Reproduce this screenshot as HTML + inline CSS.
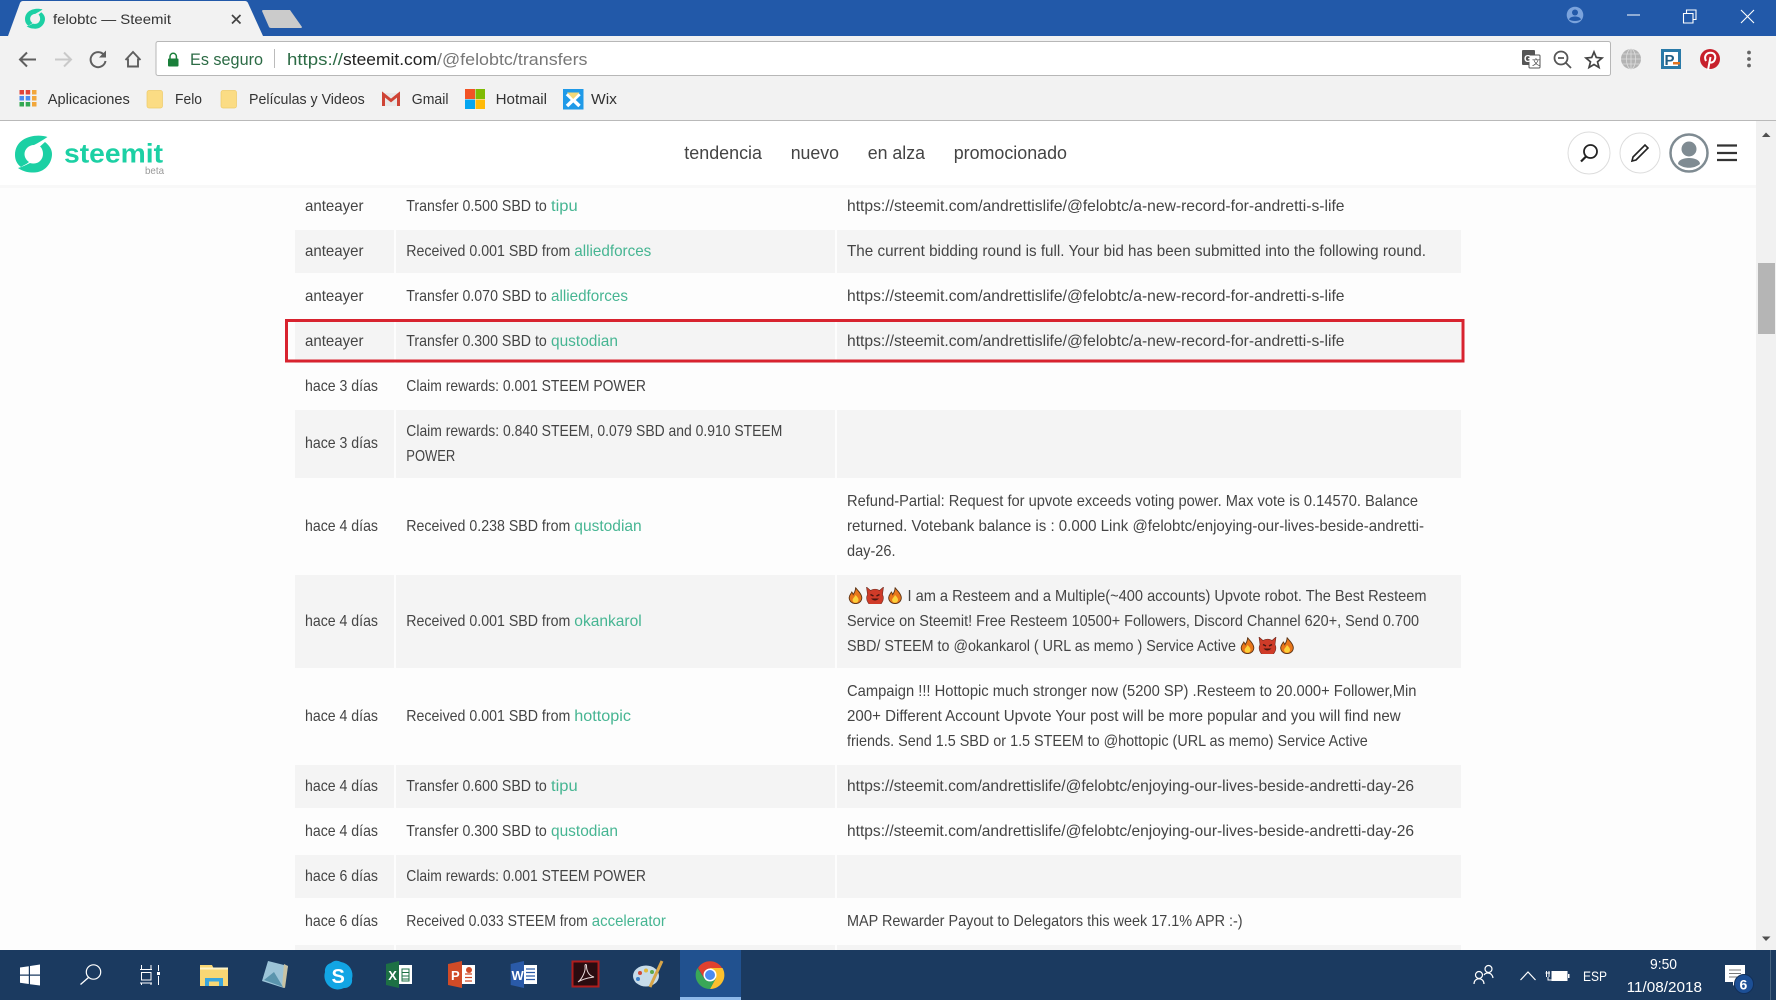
<!DOCTYPE html>
<html lang="es"><head><meta charset="utf-8"><title>felobtc — Steemit</title>
<style>
html,body{margin:0;padding:0;width:1776px;height:1000px;overflow:hidden;background:#fdfdfd}
svg{display:block;font-family:"Liberation Sans",sans-serif}
.t{font-size:15.6px;fill:#444}
.l{font-size:15.6px;fill:#46b592}
.b{font-size:14.5px;fill:#333}
.n{font-size:18px;fill:#444}
.w{fill:#fff}
</style></head><body>
<svg width="1776" height="1000" viewBox="0 0 1776 1000" xmlns="http://www.w3.org/2000/svg">
<defs>
<symbol id="fire" viewBox="0 0 15 17"><path d="M7.5 .5C9 3 13.5 6 13.8 10.500C14 14 11 16.600 7.500 16.600C4 16.600 1 14 1.200 10.500C1.300 8 3 6.800 3.800 5C4.600 6 5 6.800 5.200 7.500C6.500 5.500 7.800 3 7.500 .5Z" fill="#e8761a" stroke="#5a3315" stroke-width=".9"/><path d="M7.500 8C9.500 10 10.800 11.500 10.500 13.300C10.200 15 9 15.800 7.500 15.800C6 15.800 4.800 15 4.600 13.300C4.400 11.500 6.500 10.500 7.500 8Z" fill="#fbd03a"/></symbol>
<symbol id="devil" viewBox="0 0 19 17"><path d="M1 0L5 3.500A8.300 8.300 0 0 1 14 3.500L18 0L17 7.500A8.300 8.300 0 1 1 2 7.500Z" fill="#cf3b28" stroke="#6b2a1e" stroke-width=".6"/><path d="M5 7.500L8 9M14 7.500L11 9" stroke="#4a1610" stroke-width="1.500"/><path d="M5.500 11.500Q9.500 15.500 13.500 11.500Z" fill="#4a1610"/></symbol>
<g id="swirl" fill="#1cd0a4">
<path d="M47.500 137C36 133 15 137 15 155C15 160 17 164 21 167C24 165 27 164 29 162C26 160 24.500 157 24.500 154C24.500 149 29 145 34 145C38 143 43 140 47.500 137Z"/>
<path d="M18 168C24 172 28 172.500 34 172.500C44 172.500 52 164 52 154C52 150 50 146 45 142L40 146.500C42 148 43 151 43 154C43 159 39 163.500 34 163.500C32 163.500 31 163.300 30 163C26 165 22 167 18 168Z"/>
</g>
</defs>

<!-- page bg -->
<rect width="1776" height="1000" fill="#fdfdfd"/>

<!-- table stripes -->
<g fill="#f4f4f4">
<rect x="295" y="230" width="99" height="43"/><rect x="396" y="230" width="439" height="43"/><rect x="837" y="230" width="624" height="43"/>
<rect x="295" y="320" width="99" height="43"/><rect x="396" y="320" width="439" height="43"/><rect x="837" y="320" width="624" height="43"/>
<rect x="295" y="410" width="99" height="68"/><rect x="396" y="410" width="439" height="68"/><rect x="837" y="410" width="624" height="68"/>
<rect x="295" y="575" width="99" height="93"/><rect x="396" y="575" width="439" height="93"/><rect x="837" y="575" width="624" height="93"/>
<rect x="295" y="765" width="99" height="43"/><rect x="396" y="765" width="439" height="43"/><rect x="837" y="765" width="624" height="43"/>
<rect x="295" y="855" width="99" height="43"/><rect x="396" y="855" width="439" height="43"/><rect x="837" y="855" width="624" height="43"/>
<rect x="295" y="945" width="99" height="5"/><rect x="396" y="945" width="439" height="5"/><rect x="837" y="945" width="624" height="5"/>
</g>

<!-- col 1 -->
<g class="t">
<text class="t" x="305" y="211" textLength="58.500" lengthAdjust="spacingAndGlyphs">anteayer</text>
<text class="t" x="305" y="256" textLength="58.500" lengthAdjust="spacingAndGlyphs">anteayer</text>
<text class="t" x="305" y="301" textLength="58.500" lengthAdjust="spacingAndGlyphs">anteayer</text>
<text class="t" x="305" y="346" textLength="58.500" lengthAdjust="spacingAndGlyphs">anteayer</text>
<text class="t" x="305" y="391" textLength="73" lengthAdjust="spacingAndGlyphs">hace 3 días</text>
<text class="t" x="305" y="448" textLength="73" lengthAdjust="spacingAndGlyphs">hace 3 días</text>
<text class="t" x="305" y="531" textLength="73" lengthAdjust="spacingAndGlyphs">hace 4 días</text>
<text class="t" x="305" y="626" textLength="73" lengthAdjust="spacingAndGlyphs">hace 4 días</text>
<text class="t" x="305" y="721" textLength="73" lengthAdjust="spacingAndGlyphs">hace 4 días</text>
<text class="t" x="305" y="791" textLength="73" lengthAdjust="spacingAndGlyphs">hace 4 días</text>
<text class="t" x="305" y="836" textLength="73" lengthAdjust="spacingAndGlyphs">hace 4 días</text>
<text class="t" x="305" y="881" textLength="73" lengthAdjust="spacingAndGlyphs">hace 6 días</text>
<text class="t" x="305" y="926" textLength="73" lengthAdjust="spacingAndGlyphs">hace 6 días</text>
</g>

<!-- col 2 -->
<text class="t" x="406.300" y="211" textLength="140.500" lengthAdjust="spacingAndGlyphs">Transfer 0.500 SBD to</text><text class="l" x="551" y="211" textLength="26.700" lengthAdjust="spacingAndGlyphs">tipu</text>
<text class="t" x="406.300" y="256" textLength="164" lengthAdjust="spacingAndGlyphs">Received 0.001 SBD from</text><text class="l" x="574.300" y="256" textLength="77" lengthAdjust="spacingAndGlyphs">alliedforces</text>
<text class="t" x="406.300" y="301" textLength="140.500" lengthAdjust="spacingAndGlyphs">Transfer 0.070 SBD to</text><text class="l" x="551" y="301" textLength="77" lengthAdjust="spacingAndGlyphs">alliedforces</text>
<text class="t" x="406.300" y="346" textLength="140.500" lengthAdjust="spacingAndGlyphs">Transfer 0.300 SBD to</text><text class="l" x="551" y="346" textLength="67" lengthAdjust="spacingAndGlyphs">qustodian</text>
<text class="t" x="406.300" y="391" textLength="239.600" lengthAdjust="spacingAndGlyphs">Claim rewards: 0.001 STEEM POWER</text>
<text class="t" x="406.300" y="436" textLength="376" lengthAdjust="spacingAndGlyphs">Claim rewards: 0.840 STEEM, 0.079 SBD and 0.910 STEEM</text>
<text class="t" x="406.300" y="461" textLength="49" lengthAdjust="spacingAndGlyphs">POWER</text>
<text class="t" x="406.300" y="531" textLength="164" lengthAdjust="spacingAndGlyphs">Received 0.238 SBD from</text><text class="l" x="574.300" y="531" textLength="67.400" lengthAdjust="spacingAndGlyphs">qustodian</text>
<text class="t" x="406.300" y="626" textLength="164" lengthAdjust="spacingAndGlyphs">Received 0.001 SBD from</text><text class="l" x="574.300" y="626" textLength="67.400" lengthAdjust="spacingAndGlyphs">okankarol</text>
<text class="t" x="406.300" y="721" textLength="164" lengthAdjust="spacingAndGlyphs">Received 0.001 SBD from</text><text class="l" x="574.300" y="721" textLength="56.700" lengthAdjust="spacingAndGlyphs">hottopic</text>
<text class="t" x="406.300" y="791" textLength="140.500" lengthAdjust="spacingAndGlyphs">Transfer 0.600 SBD to</text><text class="l" x="551" y="791" textLength="26.700" lengthAdjust="spacingAndGlyphs">tipu</text>
<text class="t" x="406.300" y="836" textLength="140.500" lengthAdjust="spacingAndGlyphs">Transfer 0.300 SBD to</text><text class="l" x="551" y="836" textLength="67" lengthAdjust="spacingAndGlyphs">qustodian</text>
<text class="t" x="406.300" y="881" textLength="239.600" lengthAdjust="spacingAndGlyphs">Claim rewards: 0.001 STEEM POWER</text>
<text class="t" x="406.300" y="926" textLength="181.500" lengthAdjust="spacingAndGlyphs">Received 0.033 STEEM from</text><text class="l" x="591.800" y="926" textLength="74" lengthAdjust="spacingAndGlyphs">accelerator</text>

<!-- col 3 -->
<text class="t" x="847" y="211" textLength="497.500" lengthAdjust="spacingAndGlyphs">https://steemit.com/andrettislife/@felobtc/a-new-record-for-andretti-s-life</text>
<text class="t" x="847" y="256" textLength="579" lengthAdjust="spacingAndGlyphs">The current bidding round is full. Your bid has been submitted into the following round.</text>
<text class="t" x="847" y="301" textLength="497.500" lengthAdjust="spacingAndGlyphs">https://steemit.com/andrettislife/@felobtc/a-new-record-for-andretti-s-life</text>
<text class="t" x="847" y="346" textLength="497.500" lengthAdjust="spacingAndGlyphs">https://steemit.com/andrettislife/@felobtc/a-new-record-for-andretti-s-life</text>
<text class="t" x="847" y="506" textLength="571" lengthAdjust="spacingAndGlyphs">Refund-Partial: Request for upvote exceeds voting power. Max vote is 0.14570. Balance</text>
<text class="t" x="847" y="531" textLength="577" lengthAdjust="spacingAndGlyphs">returned. Votebank balance is : 0.000 Link @felobtc/enjoying-our-lives-beside-andretti-</text>
<text class="t" x="847" y="556" textLength="48.500" lengthAdjust="spacingAndGlyphs">day-26.</text>
<use href="#fire" x="848" y="587" width="15" height="17"/><use href="#devil" x="865.500" y="587" width="19" height="17"/><use href="#fire" x="887.500" y="587" width="15" height="17"/>
<text class="t" x="907.500" y="601" textLength="519" lengthAdjust="spacingAndGlyphs">I am a Resteem and a Multiple(~400 accounts) Upvote robot. The Best Resteem</text>
<text class="t" x="847" y="626" textLength="572" lengthAdjust="spacingAndGlyphs">Service on Steemit! Free Resteem 10500+ Followers, Discord Channel 620+, Send 0.700</text>
<text class="t" x="847" y="651" textLength="389" lengthAdjust="spacingAndGlyphs">SBD/ STEEM to @okankarol ( URL as memo ) Service Active</text>
<use href="#fire" x="1240" y="637" width="15" height="17"/><use href="#devil" x="1258" y="637" width="19" height="17"/><use href="#fire" x="1279.500" y="637" width="15" height="17"/>
<text class="t" x="847" y="696" textLength="569.500" lengthAdjust="spacingAndGlyphs">Campaign !!! Hottopic much stronger now (5200 SP) .Resteem to 20.000+ Follower,Min</text>
<text class="t" x="847" y="721" textLength="553.600" lengthAdjust="spacingAndGlyphs">200+ Different Account Upvote Your post will be more popular and you will find new</text>
<text class="t" x="847" y="746" textLength="520.800" lengthAdjust="spacingAndGlyphs">friends. Send 1.5 SBD or 1.5 STEEM to @hottopic (URL as memo) Service Active</text>
<text class="t" x="847" y="791" textLength="567" lengthAdjust="spacingAndGlyphs">https://steemit.com/andrettislife/@felobtc/enjoying-our-lives-beside-andretti-day-26</text>
<text class="t" x="847" y="836" textLength="567" lengthAdjust="spacingAndGlyphs">https://steemit.com/andrettislife/@felobtc/enjoying-our-lives-beside-andretti-day-26</text>
<text class="t" x="847" y="926" textLength="395.600" lengthAdjust="spacingAndGlyphs">MAP Rewarder Payout to Delegators this week 17.1% APR :-)</text>

<!-- red box -->
<rect x="286.500" y="320.500" width="1176.500" height="40.500" fill="none" stroke="#d8232f" stroke-width="3"/>

<!-- site header -->
<rect x="0" y="185" width="1756" height="3" fill="#f8f8f8"/>
<rect x="0" y="121" width="1756" height="64" fill="#fff"/>
<use href="#swirl"/>
<text x="64" y="162.500" font-size="27" font-weight="700" fill="#1cd0a4" textLength="99" lengthAdjust="spacingAndGlyphs">steemit</text>
<text x="145" y="174" font-size="10.500" fill="#999" textLength="19" lengthAdjust="spacingAndGlyphs">beta</text>
<text class="n" x="684.300" y="159" textLength="77.700" lengthAdjust="spacingAndGlyphs">tendencia</text>
<text class="n" x="790.700" y="159" textLength="48.300" lengthAdjust="spacingAndGlyphs">nuevo</text>
<text class="n" x="867.700" y="159" textLength="57.300" lengthAdjust="spacingAndGlyphs">en alza</text>
<text class="n" x="953.700" y="159" textLength="113.300" lengthAdjust="spacingAndGlyphs">promocionado</text>
<circle cx="1589" cy="153" r="21" fill="#fff" stroke="#ddd" stroke-width="1"/>
<circle cx="1590.500" cy="151.500" r="6.500" fill="none" stroke="#222" stroke-width="1.800"/>
<path d="M1586 156.500L1581 161.500" stroke="#222" stroke-width="2.200"/>
<circle cx="1640" cy="153" r="20" fill="#fff" stroke="#ddd" stroke-width="1"/>
<path d="M1633 157L1645 145L1648 148L1636 160L1632 161Z" fill="none" stroke="#222" stroke-width="1.600"/>
<circle cx="1689" cy="153" r="18.500" fill="#fff" stroke="#7f8b92" stroke-width="2.500"/>
<circle cx="1689" cy="149" r="7.500" fill="#7f8b92"/>
<path d="M1678 164C1678 156 1700 156 1700 164C1694 169 1684 169 1678 164Z" fill="#7f8b92"/>
<path d="M1717 145.500H1737M1717 153H1737M1717 160H1737" stroke="#333" stroke-width="2.300"/>

<!-- scrollbar -->
<rect x="1756" y="121" width="20" height="829" fill="#f1f1f1"/>
<rect x="1758" y="263" width="17" height="71" fill="#b5b5b5"/>
<path d="M1762 137L1766 132.500L1770.500 137Z" fill="#505050"/>
<path d="M1762 936.500L1766 941L1770.500 936.500Z" fill="#505050"/>

<!-- title bar -->
<rect width="1776" height="36" fill="#2259a9"/>
<rect y="36" width="1776" height="84" fill="#f2f2f2"/>
<rect y="120" width="1776" height="1" fill="#b9b9b9"/>
<path d="M8 36L20 3Q21 1 23 1H245Q247 1 248 3L263 36Z" fill="#f2f2f2"/>
<use href="#swirl" transform="translate(35 19) scale(.54) translate(-33.500 -154.500)"/>
<text x="53" y="24" font-size="14" fill="#333" textLength="118" lengthAdjust="spacingAndGlyphs">felobtc — Steemit</text>
<path d="M232 15L240.500 23.500M240.500 15L232 23.500" stroke="#444" stroke-width="1.700"/>
<path d="M262 11Q262 10 263.500 10H290L302 27Q302 28 300 28H271Q269.500 28 269 27Z" fill="#cbcbcb"/>
<circle cx="1575" cy="15" r="8.300" fill="#7ba3dc"/><circle cx="1575" cy="12.500" r="3" fill="#2259a9"/><path d="M1569 19.500C1570 15.500 1580 15.500 1581 19.500C1578 21.500 1572 21.500 1569 19.500Z" fill="#2259a9"/>
<path d="M1627 15H1640" stroke="#fff" stroke-width="1"/>
<path d="M1683.500 13.500h9.500v9.500h-9.500zM1686.500 13.500v-3.500h9.500v9.500h-3" fill="none" stroke="#fff" stroke-width="1.100"/>
<path d="M1741 10L1754 23M1754 10L1741 23" stroke="#fff" stroke-width="1.100"/>

<!-- toolbar -->
<path d="M36 59.500H20M27 52.500L20 59.500L27 66.500" fill="none" stroke="#5f5f5f" stroke-width="2"/>
<path d="M71 59.500H55M64 52.500L71 59.500L64 66.500" fill="none" stroke="#c9c9c9" stroke-width="2"/>
<path d="M104 55A7.500 7.500 0 1 0 105.500 61" fill="none" stroke="#5f5f5f" stroke-width="2"/>
<path d="M106 50.500V57.500H99Z" fill="#5f5f5f"/>
<path d="M125.500 60L133 52L140.500 60M128 58.500V66.500H138V58.500" fill="none" stroke="#5f5f5f" stroke-width="1.900"/>
<rect x="156" y="41.500" width="1454.500" height="34" rx="2" fill="#fff" stroke="#b7b7b7"/>
<rect x="168" y="58.500" width="10.500" height="8" rx="1" fill="#1a7f3a"/>
<path d="M170 59V56.500a3.200 3.200 0 0 1 6.400 0V59" fill="none" stroke="#1a7f3a" stroke-width="1.500"/>
<text x="190" y="65" font-size="17" fill="#2c6b45" textLength="73" lengthAdjust="spacingAndGlyphs">Es seguro</text>
<rect x="274" y="49" width="1" height="19" fill="#bbb"/>
<text x="287" y="65" font-size="17" fill="#2c6b45" textLength="56" lengthAdjust="spacingAndGlyphs">https://</text>
<text x="343" y="65" font-size="17" fill="#222" textLength="94" lengthAdjust="spacingAndGlyphs">steemit.com</text>
<text x="437" y="65" font-size="17" fill="#777" textLength="150.500" lengthAdjust="spacingAndGlyphs">/@felobtc/transfers</text>

<!-- omnibox right icons -->
<rect x="1522" y="50" width="13" height="15" rx="1" fill="#555"/>
<rect x="1529" y="55" width="11" height="13" rx="1" fill="#fff" stroke="#555"/>
<text x="1524" y="62" font-size="10" font-weight="700" fill="#fff">G</text>
<text x="1532" y="65" font-size="8" fill="#444">文</text>
<circle cx="1561" cy="58" r="6.500" fill="none" stroke="#555" stroke-width="1.800"/>
<path d="M1558 58H1564M1566 63L1571 68" stroke="#555" stroke-width="1.800"/>
<path d="M1594 52L1596.300 57.500L1602 58L1597.500 61.800L1599 67.500L1594 64.500L1589 67.500L1590.500 61.800L1586 58L1591.700 57.500Z" fill="none" stroke="#444" stroke-width="1.700"/>
<circle cx="1631" cy="59" r="10" fill="#b3b3b3"/>
<path d="M1621 59H1641M1622.500 54H1639.500M1622.500 64H1639.500M1631 49V69" stroke="#ddd" stroke-width=".8"/>
<ellipse cx="1631" cy="59" rx="4.500" ry="10" fill="none" stroke="#ddd" stroke-width=".8"/>
<rect x="1661" y="49" width="20" height="20" fill="#2a7aa8"/>
<rect x="1664" y="52" width="14" height="14" fill="#fff"/>
<text x="1664.500" y="65" font-size="15" font-weight="700" fill="#1f5f86">P</text>
<rect x="1673" y="62" width="7" height="2.500" fill="#e2731e"/>
<circle cx="1710" cy="59" r="10" fill="#c8202c"/>
<path d="M1708 70L1710.500 57M1706 61C1703.500 56 1706.500 52.800 1710.500 52.800C1714.500 52.800 1716 56 1715 59C1714 62.500 1710.500 63.500 1709 61.500" fill="none" stroke="#fff" stroke-width="2"/>
<circle cx="1749" cy="52.500" r="1.900" fill="#666"/><circle cx="1749" cy="59" r="1.900" fill="#666"/><circle cx="1749" cy="65.500" r="1.900" fill="#666"/>

<!-- bookmarks -->
<g>
<rect x="19.500" y="90" width="4.500" height="4.500" fill="#e0453a"/><rect x="25.700" y="90" width="4.500" height="4.500" fill="#e0453a"/><rect x="32" y="90" width="4.500" height="4.500" fill="#f2a73b"/>
<rect x="19.500" y="96" width="4.500" height="4.500" fill="#4a8bf0"/><rect x="25.700" y="96" width="4.500" height="4.500" fill="#4a8bf0"/><rect x="32" y="96" width="4.500" height="4.500" fill="#f2a73b"/>
<rect x="19.500" y="102" width="4.500" height="4.500" fill="#34a853"/><rect x="25.700" y="102" width="4.500" height="4.500" fill="#34a853"/><rect x="32" y="102" width="4.500" height="4.500" fill="#f2a73b"/>
</g>
<text class="b" x="47.800" y="104" textLength="82" lengthAdjust="spacingAndGlyphs">Aplicaciones</text>
<rect x="147" y="90.500" width="15.500" height="17.500" rx="2" fill="#fbdc84" stroke="#eecb6a" stroke-width=".7"/>
<text class="b" x="175" y="104" textLength="27" lengthAdjust="spacingAndGlyphs">Felo</text>
<rect x="221" y="90.500" width="15.500" height="17.500" rx="2" fill="#fbdc84" stroke="#eecb6a" stroke-width=".7"/>
<text class="b" x="249" y="104" textLength="115.700" lengthAdjust="spacingAndGlyphs">Películas y Videos</text>
<rect x="382" y="93" width="18" height="13" fill="#e8e8e8"/>
<path d="M383.500 106V94.500L391 100.500L398.500 94.500V106" fill="none" stroke="#cf4436" stroke-width="3"/>
<text class="b" x="411.800" y="104" textLength="36.700" lengthAdjust="spacingAndGlyphs">Gmail</text>
<rect x="465" y="89" width="10" height="10" fill="#f25325"/><rect x="475.500" y="89" width="9.500" height="10" fill="#80bb03"/>
<rect x="465" y="99.500" width="10" height="9.500" fill="#05a6f0"/><rect x="475.500" y="99.500" width="9.500" height="9.500" fill="#ffba08"/>
<text class="b" x="495.600" y="104" textLength="51.400" lengthAdjust="spacingAndGlyphs">Hotmail</text>
<rect x="563" y="89" width="20.500" height="20.500" fill="#1f9ae8"/>
<path d="M567 94L579.500 106M579.500 94L567 106" stroke="#fff" stroke-width="3.500"/>
<path d="M567 92.500H579.500L573.200 99Z" fill="#f3d97a"/>
<text class="b" x="591" y="104" textLength="26" lengthAdjust="spacingAndGlyphs">Wix</text>

<!-- taskbar -->
<rect y="950" width="1776" height="50" fill="#1b3a60"/>
<rect x="680" y="950" width="61" height="50" fill="#21518f"/>
<rect x="680" y="997" width="61" height="3" fill="#8db8ea"/>
<rect x="1770" y="950" width="1" height="50" fill="#46627f"/>
<path d="M20 967.500L28.800 966.200V974.500H20ZM30 966L40 964.500V974.500H30ZM20 975.700H28.800V984L20 982.700ZM30 975.700H40V985.500L30 984.200Z" fill="#fff"/>
<circle cx="93.500" cy="972" r="7.200" fill="none" stroke="#fff" stroke-width="1.200"/>
<path d="M88.500 977.500L80.500 984.500" stroke="#fff" stroke-width="1.300"/>
<path d="M140 969.500H152M141.500 972.500H151V980H141.500ZM140 983H152M141.500 965V969.500M151 965V969.500M141.500 983V985M151 983V985M158.500 965V971M158.500 976V985" fill="none" stroke="#fff" stroke-width="1"/>
<rect x="157" y="972" width="3" height="3" fill="#fff"/>
<path d="M200 965H212L214 969H228V986H200Z" fill="#f8d774"/>
<rect x="200" y="967.500" width="28" height="2" fill="#fff3c4"/>
<path d="M205 986V978H223V986H219V981.500H209V986Z" fill="#3aa5dc"/>
<path d="M268 961L288 966L284 988L262 981Z" fill="#9cc4d8"/>
<path d="M284 964L288 966L285 988L282 987Z" fill="#c9c3a4"/>
<path d="M264 980L274 972L283 987Z" fill="#5a94ad"/>
<path d="M331 963A8 8 0 0 1 341 962A13.500 13.500 0 0 1 352 979A7.500 7.500 0 0 1 344 988A13.500 13.500 0 0 1 325 972A8 8 0 0 1 331 963Z" fill="#12a5e4"/>
<text x="331.500" y="983" font-size="20" font-weight="700" fill="#fff">S</text>
<path d="M386 964L399 961V988L386 985Z" fill="#1d7044"/>
<rect x="399" y="965" width="13" height="19" fill="#fff"/>
<path d="M402 969H409V981H402ZM402 972.500H409M402 976H409M402 979H409" fill="none" stroke="#1d7044" stroke-width="1"/>
<text x="388.300" y="980" font-size="13" font-weight="700" fill="#fff">X</text>
<path d="M448 964L462 961V988L448 985Z" fill="#d04b27"/>
<rect x="462" y="965" width="13" height="19" fill="#fff"/>
<path d="M465 974H472M465 977.500H472M465 981H472" stroke="#d04b27" stroke-width="1.300"/>
<circle cx="469" cy="970" r="3" fill="#d04b27"/>
<text x="451" y="980" font-size="13" font-weight="700" fill="#fff">P</text>
<path d="M510.700 964L524 961V988L510.700 985Z" fill="#2a5aa8"/>
<rect x="524" y="965" width="13" height="19" fill="#fff"/>
<path d="M526 969H535M526 972.500H535M526 976H535M526 979.500H535" stroke="#2a5aa8" stroke-width="1.300"/>
<text x="511.500" y="980" font-size="13" font-weight="700" fill="#fff">W</text>
<rect x="572.500" y="961.500" width="26" height="25" fill="#2a0c10" stroke="#b01d1d" stroke-width="2"/>
<path d="M578 982C582 979 586 971 585 966C585 964 586.500 964 586.500 966C586.500 971 589 976 594 977C591 977.500 584 978 578 982Z" fill="none" stroke="#e8d8d8" stroke-width="1"/>
<ellipse cx="646" cy="976" rx="13" ry="10.500" fill="#c7dcea"/>
<circle cx="640" cy="973" r="2" fill="#d04a3a"/><circle cx="646" cy="970.500" r="2" fill="#e2b93c"/><circle cx="652" cy="972" r="2" fill="#5fa84a"/><circle cx="638" cy="979" r="2" fill="#3b7fc9"/>
<path d="M662 961L650 987" stroke="#d8a548" stroke-width="3"/>
<path d="M710 975L722 968A14 14 0 0 0 698 968L704 978Z" fill="#e0412f"/>
<path d="M710 989A14 14 0 0 0 722.500 968L710 968L716 978Z" fill="#fbc02d"/>
<path d="M710 989A14 14 0 0 1 697.500 968L704.500 979L710 982L716 978Z" fill="#3aa757"/>
<circle cx="710" cy="975" r="6.500" fill="#fff"/><circle cx="710" cy="975" r="5" fill="#4a8bf0"/>

<!-- tray -->
<circle cx="1488.500" cy="969" r="3.500" fill="none" stroke="#fff" stroke-width="1.200"/>
<circle cx="1479" cy="975" r="3.500" fill="none" stroke="#fff" stroke-width="1.200"/>
<path d="M1474 984C1474 977 1484 977 1484 984M1484 975C1486 972 1492 972 1493 978" fill="none" stroke="#fff" stroke-width="1.200"/>
<path d="M1520.500 980L1528 972L1535.500 980" fill="none" stroke="#fff" stroke-width="1.200"/>
<rect x="1552" y="971.500" width="15" height="9" fill="#fff" stroke="#fff"/>
<rect x="1568" y="974" width="1.500" height="4" fill="#fff"/>
<path d="M1549 971V977M1546.500 971V977M1545.500 973H1550M1548 977V980H1552" stroke="#fff" fill="none"/>
<text x="1583" y="981" font-size="14" fill="#fff" textLength="24" lengthAdjust="spacingAndGlyphs">ESP</text>
<text x="1650" y="969" font-size="14.500" fill="#fff" textLength="27" lengthAdjust="spacingAndGlyphs">9:50</text>
<text x="1626.700" y="992" font-size="14.500" fill="#fff" textLength="75.300" lengthAdjust="spacingAndGlyphs">11/08/2018</text>
<path d="M1725 965H1745V982H1736L1733 986V982H1725Z" fill="#fff"/>
<path d="M1729 970H1741M1729 973.500H1741M1729 977H1737" stroke="#777" stroke-width="1"/>
<circle cx="1744" cy="984" r="9.500" fill="#1c4f96" stroke="#12305a" stroke-width="1"/>
<text x="1739.500" y="989.500" font-size="14" font-weight="700" fill="#fff">6</text>
</svg>
</body></html>
